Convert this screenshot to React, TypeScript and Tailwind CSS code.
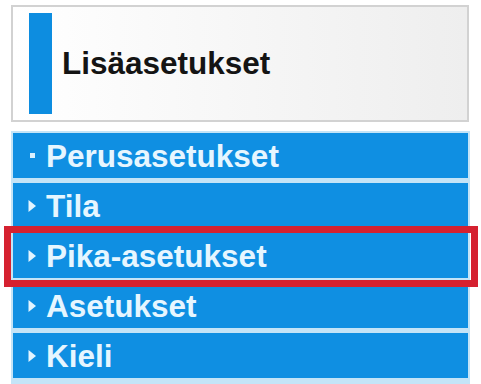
import React from 'react';

const items = [
  { label: 'Perusasetukset', marker: 'dot' },
  { label: 'Tila', marker: 'arrow' },
  { label: 'Pika-asetukset', marker: 'arrow' },
  { label: 'Asetukset', marker: 'arrow' },
  { label: 'Kieli', marker: 'arrow' },
];

const Marker = ({ kind }: { kind: string }) =>
  kind === 'dot' ? (
    <span className="w-[12px] flex justify-center">
      <span className="block w-[5px] h-[5px] bg-[#d9f1ff]" />
    </span>
  ) : (
    <svg width="12" height="14" viewBox="0 0 12 14" className="shrink-0">
      <path d="M2.5 1 L10 7 L2.5 13 Z" fill="#e4f5ff" />
    </svg>
  );

export default function App() {
  return (
    <div className="relative w-[481px] h-[384px] bg-white overflow-hidden font-['Liberation_Sans',Arial,sans-serif]">
      <div className="ml-[11px] mt-[5px] w-[458px] h-[117px] border-2 border-[#d2d2d2] bg-gradient-to-r from-white to-[#eeeeee] flex items-center pl-[16px]">
        <div className="w-[23px] h-[101px] bg-[#0d8de0]" />
        <span className="ml-[10px] text-[31.5px] font-bold text-[#141414]">
          Lisäasetukset
        </span>
      </div>

      <div className="ml-[11px] mt-[9px] w-[459px] bg-[#c4e4f7] px-[2px] pt-[2px] pb-[6px] flex flex-col gap-[5px]">
        {items.map((it) => (
          <div
            key={it.label}
            className="h-[45px] bg-[#0f8fe2] flex items-center pl-[13px] gap-[8px]"
          >
            <Marker kind={it.marker} />
            <span className="text-[31.5px] font-bold text-[#e6f6ff] leading-none pt-[2px]">
              {it.label}
            </span>
          </div>
        ))}
      </div>

      <div className="absolute left-[4px] top-[226px] w-[474px] h-[61px] border-[7px] border-[#d52130]" />
    </div>
  );
}
